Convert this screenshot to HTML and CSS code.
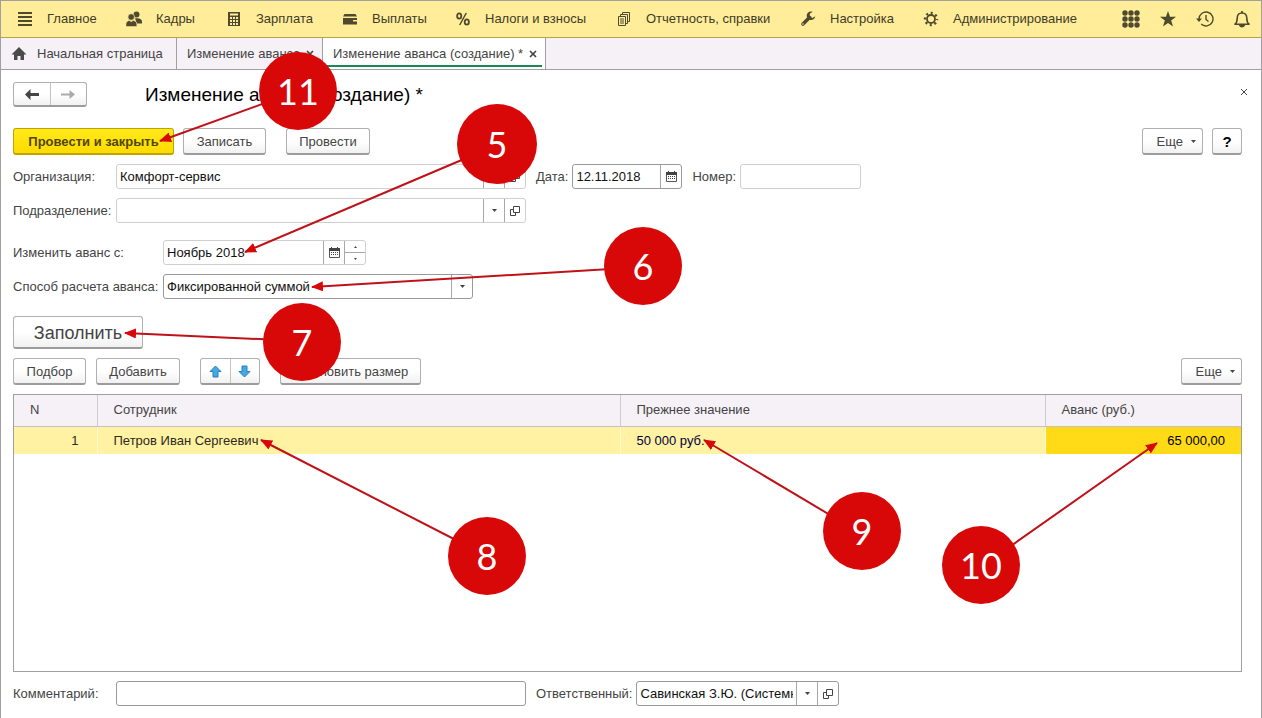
FILE: index.html
```html
<!DOCTYPE html>
<html lang="ru">
<head>
<meta charset="utf-8">
<title>Изменение аванса (создание) *</title>
<link rel="stylesheet" href="styles.css">
</head>
<body>
<svg class="defs" aria-hidden="true">
  <symbol id="i-cal" viewBox="0 0 11 11"><path d="M.5 3v7.500h10V3" fill="none" stroke="#555"/><path d="M0 1h11v3H0zM2 0h1v2H2zM8 0h1v2H8z" fill="#444"/><path d="M2 5.500h7M2 7.500h7" stroke="#444" stroke-dasharray="1 1" fill="none"/></symbol>
  <symbol id="i-open" viewBox="0 0 10 10"><path d="M3.500.5h6v6h-6zM3.500 3.500h-3v6h5v-3" fill="none" stroke="#444"/></symbol>
  <symbol id="i-caret" viewBox="0 0 5 3"><path d="M0 0h5L2.500 3z" fill="#444"/></symbol>
  <symbol id="i-x" viewBox="0 0 8 8"><path d="M1 1l6 6M7 1L1 7" stroke="currentColor" fill="none"/></symbol>
  <symbol id="i-xb" viewBox="0 0 8 8"><path d="M1 1l6 6M7 1L1 7" stroke="currentColor" stroke-width="1.700" fill="none"/></symbol>
</svg>

<header class="topbar">
  <nav class="menu" aria-label="Разделы">
    <a href="#"><svg width="16" height="16" viewBox="0 0 16 16"><path d="M1 2h14M1 6h14M1 10h14M1 14h14" stroke="#4f4a2e" stroke-width="2"/></svg>Главное</a>
    <a href="#"><svg width="16" height="16" viewBox="0 0 16 16" fill="#4f4a2e"><circle cx="10.500" cy="3.400" r="3"/><path d="M9 7.500c4-1 7 .5 7 3v2h-5z"/><circle cx="5.200" cy="6" r="3.300" stroke="#ffed99" stroke-width=".7"/><path d="M0 15.500v-2.500c0-2 1.500-3 3.200-3.600l2 1.400 2-1.400c2 .6 3.600 1.600 3.600 3.600v2.500z" stroke="#ffed99" stroke-width=".5"/></svg>Кадры</a>
    <a href="#"><svg width="16" height="16" viewBox="0 0 16 16"><path d="M2 1h12v14H2z" fill="#4f4a2e"/><path d="M4 2.500h8v2H4zM4 6h2v2H4zM7 6h2v2H7zM10 6h2v2h-2zM4 9h2v2H4zM7 9h2v2H7zM10 9h2v2h-2zM4 12h2v2H4zM7 12h2v2H7zM10 12h2v2h-2z" fill="#ffed99"/></svg>Зарплата</a>
    <a href="#"><svg width="16" height="16" viewBox="0 0 16 16" fill="#4f4a2e"><path d="M2.500 3h11l1.500 2.500H1zM1 7h14v2h-4v1.500h4v3H1z"/></svg>Выплаты</a>
    <a href="#"><svg width="16" height="16" viewBox="0 0 16 16" fill="none" stroke="#4f4a2e" stroke-width="1.800"><ellipse cx="4.200" cy="5" rx="2.100" ry="2.700"/><ellipse cx="11.800" cy="11" rx="2.100" ry="2.700"/><path d="M11.300 2l-6.600 12" stroke-width="1.500"/></svg>Налоги и взносы</a>
    <a href="#"><svg width="16" height="16" viewBox="0 0 16 16" fill="none" stroke="#4f4a2e"><path d="M2.500 5.500h7v9h-7zM4.500 5V3.500h7v9H10M6.500 3V1.500h7v9H12M4 8h4M4 10h4M4 12h4"/></svg>Отчетность, справки</a>
    <a href="#"><svg width="16" height="16" viewBox="0 0 16 16"><path d="M3 13L9.500 6.500" stroke="#4f4a2e" stroke-width="3.600" stroke-linecap="round"/><path d="M12.800.8a4.300 4.300 0 1 0 2.500 4.400L12.500 7 9.700 5.600l.2-3z" fill="#4f4a2e"/><circle cx="3" cy="13" r=".8" fill="#ffed99"/></svg>Настройка</a>
    <a href="#"><svg width="16" height="16" viewBox="0 0 16 16" fill="none" stroke="#4f4a2e"><circle cx="8" cy="8" r="4" stroke-width="1.800"/><circle cx="8" cy="8" r="6" stroke-width="2.400" stroke-dasharray="2 2.712" stroke-dashoffset="1"/></svg>Администрирование</a>
  </nav>
  <div class="tools">
    <button type="button" aria-label="Все функции"><svg width="18" height="18" viewBox="0 0 18 18" fill="#4f4a2e"><circle cx="3" cy="3" r="2.700"/><circle cx="9" cy="3" r="2.700"/><circle cx="15" cy="3" r="2.700"/><circle cx="3" cy="9" r="2.700"/><circle cx="9" cy="9" r="2.700"/><circle cx="15" cy="9" r="2.700"/><circle cx="3" cy="15" r="2.700"/><circle cx="9" cy="15" r="2.700"/><circle cx="15" cy="15" r="2.700"/></svg></button>
    <button type="button" aria-label="Избранное"><svg width="18" height="18" viewBox="0 0 18 18"><path d="M9 1l2 5.800h6L12.200 10.500 14 16.500 9 12.900 4 16.500l1.800-6L1 6.800h6z" fill="#4f4a2e"/></svg></button>
    <button type="button" aria-label="История"><svg width="18" height="18" viewBox="0 0 18 18" fill="none" stroke="#4f4a2e" stroke-width="1.400"><path d="M3 9a7 7 0 1 1 2.200 5.100M10 5v4.500l2.500 2"/><path d="M0 8.500h6l-3 3.500z" fill="#4f4a2e" stroke="none"/></svg></button>
    <button type="button" aria-label="Уведомления"><svg width="18" height="18" viewBox="0 0 18 18" fill="none" stroke="#4f4a2e" stroke-width="1.600"><path d="M2 14.200h14c-2-1.500-2.200-3-2.200-6C13.800 5 12 3 9 3S4.200 5 4.200 8.200c0 3-.2 4.500-2.200 6z" stroke-linejoin="round"/><path d="M9 1v2M7 15.500c.5 1.500 3.500 1.500 4 0z" stroke-width="1.800"/></svg></button>
  </div>
</header>

<nav class="tabs" aria-label="Открытые окна">
  <div class="tab home"><svg width="16" height="14" viewBox="0 0 16 14"><path d="M8 0l7.500 7.500H13V13H9.500V9h-3v4H3V7.500H.5z" fill="#4a4a4a"/></svg><a href="#">Начальная страница</a></div>
  <div class="tab second"><a href="#">Изменение аванса</a><button type="button" aria-label="Закрыть вкладку"><svg width="8" height="8"><use href="#i-xb"/></svg></button></div>
  <div class="tab active"><a href="#">Изменение аванса (создание) *</a><button type="button" aria-label="Закрыть вкладку"><svg width="8" height="8"><use href="#i-xb"/></svg></button></div>
</nav>

<main class="form">
  <div class="title-row">
    <div class="pair history">
      <button type="button" aria-label="Назад"><svg width="14" height="11" viewBox="0 0 14 11"><path d="M0 5.500L5.500 0v4H14v3H5.500v4z" fill="#444"/></svg></button><button type="button" aria-label="Вперед"><svg width="14" height="11" viewBox="0 0 14 11"><path d="M14 5.500L8.500 1v3.500H0v2h8.500V10z" fill="#aaa"/></svg></button>
    </div>
    <h1>Изменение аванса (создание) *</h1>
    <button type="button" class="close" aria-label="Закрыть"><svg width="8" height="8"><use href="#i-x"/></svg></button>
  </div>

  <div class="commands">
    <button type="button" class="btn primary">Провести и закрыть</button>
    <button type="button" class="btn save">Записать</button>
    <button type="button" class="btn post">Провести</button>
    <button type="button" class="btn more">Еще <svg width="5" height="3"><use href="#i-caret"/></svg></button>
    <button type="button" class="btn help">?</button>
  </div>

  <div class="row">
    <label class="lbl" for="org">Организация:</label>
    <div class="field wide"><input id="org" value="Комфорт-сервис"><button type="button" aria-label="Выбрать"><svg width="5" height="3"><use href="#i-caret"/></svg></button><button type="button" aria-label="Открыть"><svg width="10" height="10"><use href="#i-open"/></svg></button></div>
    <label class="side" for="date">Дата:</label>
    <div class="field strong date"><input id="date" value="12.11.2018"><button type="button" aria-label="Календарь"><svg width="11" height="11"><use href="#i-cal"/></svg></button></div>
    <label class="side" for="num">Номер:</label>
    <div class="field num"><input id="num"></div>
  </div>
  <div class="row">
    <label class="lbl" for="dep">Подразделение:</label>
    <div class="field wide"><input id="dep"><button type="button" aria-label="Выбрать"><svg width="5" height="3"><use href="#i-caret"/></svg></button><button type="button" aria-label="Открыть"><svg width="10" height="10"><use href="#i-open"/></svg></button></div>
  </div>
  <div class="row spaced">
    <label class="lbl long" for="month">Изменить аванс с:</label>
    <div class="field month"><input id="month" value="Ноябрь 2018"><button type="button" aria-label="Календарь"><svg width="11" height="11"><use href="#i-cal"/></svg></button><div class="spin"><button type="button" aria-label="Больше"><svg width="3" height="2" viewBox="0 0 3 2"><path d="M0 2h3L1.500 0z" fill="#444"/></svg></button><button type="button" aria-label="Меньше"><svg width="3" height="2" viewBox="0 0 3 2"><path d="M0 0h3L1.500 2z" fill="#444"/></svg></button></div></div>
  </div>
  <div class="row">
    <label class="lbl long" for="way">Способ расчета аванса:</label>
    <div class="field strong way"><select id="way"><option>Фиксированной суммой</option></select><span class="drop"><svg width="5" height="3"><use href="#i-caret"/></svg></span></div>
  </div>

  <button type="button" class="btn fill">Заполнить</button>

  <div class="commands list-commands">
    <button type="button" class="btn pick">Подбор</button>
    <button type="button" class="btn add">Добавить</button>
    <div class="pair move">
      <button type="button" aria-label="Вверх"><svg width="13" height="13" viewBox="0 0 13 13"><path d="M6.500 1L12 6.500H9V12H4V6.500H1z" fill="#45a8e6" stroke="#2b7fb5"/></svg></button><button type="button" aria-label="Вниз"><svg width="13" height="13" viewBox="0 0 13 13"><path d="M6.500 12L12 6.500H9V1H4v5.500H1z" fill="#45a8e6" stroke="#2b7fb5"/></svg></button>
    </div>
    <button type="button" class="btn size">Установить размер</button>
    <button type="button" class="btn more">Еще <svg width="5" height="3"><use href="#i-caret"/></svg></button>
  </div>

  <div class="grid">
    <table>
      <colgroup><col class="c-n"><col class="c-emp"><col class="c-prev"><col class="c-adv"></colgroup>
      <thead><tr><th scope="col">N</th><th scope="col">Сотрудник</th><th scope="col">Прежнее значение</th><th scope="col">Аванс (руб.)</th></tr></thead>
      <tbody><tr><td class="n">1</td><td>Петров Иван Сергеевич</td><td class="prev">50 000 руб.</td><td class="sum">65 000,00</td></tr></tbody>
    </table>
  </div>

  <div class="row footer">
    <label class="lbl" for="note">Комментарий:</label>
    <div class="field strong wide"><input id="note"></div>
    <label class="side" for="resp">Ответственный:</label>
    <div class="field strong resp"><input id="resp" value="Савинская З.Ю. (Системный администратор)"><button type="button" aria-label="Выбрать"><svg width="5" height="3"><use href="#i-caret"/></svg></button><button type="button" aria-label="Открыть"><svg width="10" height="10"><use href="#i-open"/></svg></button></div>
  </div>
</main>

<svg class="callouts" width="1262" height="718" viewBox="0 0 1262 718">
  <defs><marker id="head" markerUnits="userSpaceOnUse" markerWidth="12" markerHeight="10" refX="11" refY="5" orient="auto"><path d="M0 0L12 5L0 10z" fill="#d80808"/></marker></defs>
  <g class="lines" marker-end="url(#head)">
    <path d="M298 91L160 141"/><path d="M497 145L245 252"/><path d="M643 267L312 287"/><path d="M302 341L125 333"/>
    <path d="M487 556L261 440"/><path d="M862 534L704 440"/><path d="M981 567L1157 443"/>
  </g>
  <g class="dots">
    <circle cx="298" cy="91" r="39"/><circle cx="497" cy="144" r="40"/><circle cx="643" cy="266" r="39"/><circle cx="302" cy="342" r="39"/>
    <circle cx="487" cy="556" r="39"/><circle cx="862" cy="531" r="39"/><circle cx="981" cy="565" r="39"/>
  </g>
  <g class="nums">
    <text x="298" y="105">11</text><text x="497" y="158">5</text><text x="643" y="280">6</text><text x="302" y="356">7</text>
    <text x="487" y="570">8</text><text x="862" y="545">9</text><text x="981" y="579">10</text>
  </g>
</svg>
</body>
</html>
```
FILE: styles.css
```css
* { box-sizing: border-box; }
body {
  position: relative;
  margin: 0;
  min-height: 100vh;
  display: flex;
  flex-direction: column;
  border: 1px solid #a0a0a0;
  border-bottom: 0;
  background: #fff;
  color: #444;
  font: 13px/16px "Liberation Sans", Arial, sans-serif;
}
button, input, select { font: inherit; color: inherit; }
button { padding: 0; border: 0; background: none; }
a { color: inherit; text-decoration: none; }
svg { display: block; flex: none; }
.defs { position: absolute; width: 0; height: 0; }

.topbar {
  display: flex;
  justify-content: space-between;
  align-items: center;
  height: 37px;
  padding: 0 10px 0 16px;
  background: #ffed99;
  border-bottom: 1px solid #b5a545;
  color: #403c28;
}
.menu { display: grid; grid-template-columns: 109px 100px 116px 113px 161px 184px 123px auto; }
.menu a { display: flex; align-items: center; gap: 14px; white-space: nowrap; }
.tools { display: flex; gap: 19px; }

.tabs { display: flex; height: 32px; background: #f6f1f6; border-bottom: 1px solid #a0a0a0; }
.tab { display: flex; align-items: center; white-space: nowrap; border-right: 1px solid #a0a0a0; }
.tab a { flex: 1; }
.home { width: 176px; padding-left: 10px; gap: 10px; }
.second { width: 146px; padding: 0 8px 0 10px; }
.active { position: relative; width: 223px; padding: 0 8px 0 10px; background: #fff; }
.active::after { content: ""; position: absolute; left: 4px; right: 3px; bottom: 2px; height: 2px; background: #1a8754; }

.form { flex: 1; display: flex; flex-direction: column; padding: 12px 19px 12px 12px; }
.title-row { display: flex; align-items: center; height: 25px; }
.title-row h1 { flex: 1; margin: 0 0 0 58px; color: #000; font-size: 19px; line-height: 24px; font-weight: 400; white-space: nowrap; }
.close { align-self: flex-start; padding: 6px 0; margin-right: -6px; }

.btn, .pair {
  border: 1px solid #b0b0b0;
  border-bottom: 2px solid #9c9c9c;
  border-radius: 3px;
  background: linear-gradient(#fff 50%, #f1f1f1);
}
.btn { height: 27px; padding-top: 1px; white-space: nowrap; }
.pair { display: flex; }
.pair button { flex: 1; display: flex; align-items: center; justify-content: center; }
.pair button + button { border-left: 1px solid #c4c4c4; }
.history { width: 74px; height: 25px; }
.move { width: 60px; height: 27px; margin: 0 20px; }

.commands { display: flex; margin-top: 21px; }
.primary { width: 161px; background: linear-gradient(#ffea1a, #ffdb00); border-color: #bfa300; font-weight: 700; color: #504600; }
.save { width: 83px; margin-left: 9px; }
.post { width: 84px; margin-left: 20px; }
.more { display: flex; align-items: center; justify-content: flex-end; gap: 8px; width: 61px; padding-right: 6px; margin-left: auto; }
.help { width: 30px; margin-left: 9px; color: #000; font-size: 15px; font-weight: 700; }
.fill { align-self: flex-start; width: 130px; height: 33px; margin-top: 17px; font-size: 18px; }
.list-commands { margin-top: 9px; }
.pick { width: 73px; margin-right: 10px; }
.add { width: 84px; }
.size { width: 141px; }

.row { display: flex; align-items: center; margin-top: 9px; }
.spaced { margin-top: 17px; }
.lbl { width: 103px; white-space: nowrap; }
.long { width: 150px; }
.side { margin: 0 4px 0 10px; white-space: nowrap; }
.field { display: flex; height: 25px; border: 1px solid #cfcfcf; border-radius: 3px; background: #fff; }
.field input, .field select { flex: 1; min-width: 0; padding: 0 3px; border: 0; background: none; color: #111; outline: 0; }
.field select { appearance: none; }
.field > button, .drop { display: flex; align-items: center; justify-content: center; width: 21px; border-left: 1px solid #a8a8a8; }
.strong { border-color: #999; }
.wide { width: 410px; }
.date { width: 110px; }
.num { width: 121px; }
.month { width: 203px; }
.way { width: 310px; }
.resp { width: 203px; }
.spin { display: flex; flex-direction: column; width: 21px; border-left: 1px solid #a8a8a8; }
.spin button { flex: 1; display: flex; align-items: center; justify-content: center; }
.spin button + button { border-top: 1px solid #a8a8a8; }

.grid { flex: 1; min-height: 120px; margin-top: 9px; border: 1px solid #a0a0a0; }
table { width: 100%; table-layout: fixed; border-collapse: collapse; }
.c-n { width: 83px; }
.c-emp { width: 523px; }
.c-adv { width: 196px; }
th { height: 31px; padding: 0 16px; background: #f6f1f6; border-bottom: 1px solid #c4c0c4; font-weight: 400; text-align: left; }
th + th { border-left: 1px solid #cfcacf; }
td { height: 28px; padding: 1px 16px 0; background: #fff2a3; color: #2d2a1c; border-bottom: 1px solid #fff; border-top: 1px solid #fff; }
td + td { border-left: 1px solid #fff8d0; }
td.n { padding-right: 18px; text-align: right; }
.prev { color: #000040; }
.sum { background: #ffdb17; color: #000; text-align: right; }

.callouts { position: absolute; left: -1px; top: -1px; pointer-events: none; }
.lines path { stroke: #bf1118; stroke-width: 2; }
.dots { fill: #d80808; }
.nums { fill: #fff; font: 36px Lato, sans-serif; text-anchor: middle; }
```
